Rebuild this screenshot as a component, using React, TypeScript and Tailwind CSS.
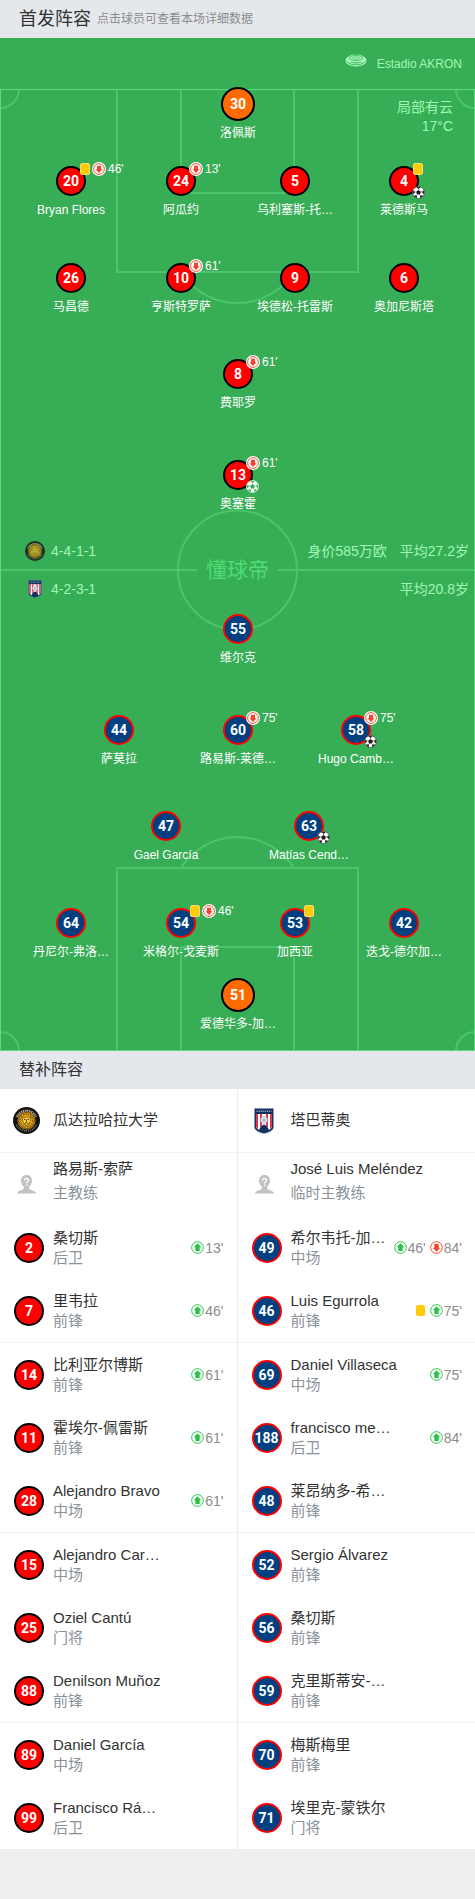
import { useState } from 'react'

type SubEvent = { kind: 'card' | 'in' | 'out'; minute?: string }

type Starter = {
  no: number
  name: string
  x: number
  y: number
  kit: Kit
  card?: boolean
  off?: string
  ball?: 'goal' | 'assist'
}

type Kit = 'home' | 'away' | 'keeper'

type Sub = { no: number; name: string; role: string; events?: SubEvent[] }

const PITCH_W = 475
const PITCH_H = 962

const kitStyles: Record<Kit, string> = {
  home: 'size-[30px] border-black bg-[#ff0000]',
  away: 'size-[30px] border-[#ff0000] bg-[#003f80]',
  keeper: 'size-[34px] border-black bg-[#ff6b00]',
}

// x / y are the centre of the shirt badge in pitch units
const starters: Starter[] = [
  { no: 30, name: '洛佩斯', x: 238, y: 15, kit: 'keeper' },
  { no: 20, name: 'Bryan Flores', x: 71, y: 92, kit: 'home', card: true, off: "46'" },
  { no: 24, name: '阿瓜约', x: 181, y: 92, kit: 'home', off: "13'" },
  { no: 5, name: '乌利塞斯-托…', x: 295, y: 92, kit: 'home' },
  { no: 4, name: '莱德斯马', x: 404, y: 92, kit: 'home', card: true, ball: 'goal' },
  { no: 26, name: '马昌德', x: 71, y: 189, kit: 'home' },
  { no: 10, name: '亨斯特罗萨', x: 181, y: 189, kit: 'home', off: "61'" },
  { no: 9, name: '埃德松-托雷斯', x: 295, y: 189, kit: 'home' },
  { no: 6, name: '奥加尼斯塔', x: 404, y: 189, kit: 'home' },
  { no: 8, name: '费耶罗', x: 238, y: 285, kit: 'home', off: "61'" },
  { no: 13, name: '奥塞霍', x: 238, y: 386, kit: 'home', off: "61'", ball: 'assist' },
  { no: 55, name: '维尔克', x: 238, y: 540, kit: 'away' },
  { no: 44, name: '萨莫拉', x: 119, y: 641, kit: 'away' },
  { no: 60, name: '路易斯-莱德…', x: 238, y: 641, kit: 'away', off: "75'" },
  { no: 58, name: 'Hugo Camb…', x: 356, y: 641, kit: 'away', off: "75'", ball: 'goal' },
  { no: 47, name: 'Gael García', x: 166, y: 737, kit: 'away' },
  { no: 63, name: 'Matías Cend…', x: 309, y: 737, kit: 'away', ball: 'goal' },
  { no: 64, name: '丹尼尔-弗洛…', x: 71, y: 834, kit: 'away' },
  { no: 54, name: '米格尔-戈麦斯', x: 181, y: 834, kit: 'away', card: true, off: "46'" },
  { no: 53, name: '加西亚', x: 295, y: 834, kit: 'away', card: true },
  { no: 42, name: '迭戈-德尔加…', x: 404, y: 834, kit: 'away' },
  { no: 51, name: '爱德华多-加…', x: 238, y: 906, kit: 'keeper' },
]

const homeSubs: Sub[] = [
  { no: 2, name: '桑切斯', role: '后卫', events: [{ kind: 'in', minute: "13'" }] },
  { no: 7, name: '里韦拉', role: '前锋', events: [{ kind: 'in', minute: "46'" }] },
  { no: 14, name: '比利亚尔博斯', role: '前锋', events: [{ kind: 'in', minute: "61'" }] },
  { no: 11, name: '霍埃尔-佩雷斯', role: '前锋', events: [{ kind: 'in', minute: "61'" }] },
  { no: 28, name: 'Alejandro Bravo', role: '中场', events: [{ kind: 'in', minute: "61'" }] },
  { no: 15, name: 'Alejandro Car…', role: '中场' },
  { no: 25, name: 'Oziel Cantú', role: '门将' },
  { no: 88, name: 'Denilson Muñoz', role: '前锋' },
  { no: 89, name: 'Daniel García', role: '中场' },
  { no: 99, name: 'Francisco Rá…', role: '后卫' },
]

const awaySubs: Sub[] = [
  { no: 49, name: '希尔韦托-加…', role: '中场', events: [{ kind: 'in', minute: "46'" }, { kind: 'out', minute: "84'" }] },
  { no: 46, name: 'Luis Egurrola', role: '前锋', events: [{ kind: 'card' }, { kind: 'in', minute: "75'" }] },
  { no: 69, name: 'Daniel Villaseca', role: '中场', events: [{ kind: 'in', minute: "75'" }] },
  { no: 188, name: 'francisco me…', role: '后卫', events: [{ kind: 'in', minute: "84'" }] },
  { no: 48, name: '莱昂纳多-希…', role: '前锋' },
  { no: 52, name: 'Sergio Álvarez', role: '前锋' },
  { no: 56, name: '桑切斯', role: '前锋' },
  { no: 59, name: '克里斯蒂安-…', role: '前锋' },
  { no: 70, name: '梅斯梅里', role: '前锋' },
  { no: 71, name: '埃里克-蒙铁尔', role: '门将' },
]

function SubArrow({ kind, disc }: { kind: 'in' | 'out'; disc?: boolean }) {
  const color = kind === 'in' ? '#27c346' : '#f5432c'
  return (
    <svg viewBox={disc ? '0 0 28 28' : '2 2 24 24'} className={disc ? 'size-3.5' : 'size-[13px]'} aria-hidden="true">
      <circle cx="14" cy="14" r="14" fill="#fff" />
      <circle cx="14" cy="14" r="10.8" fill="none" stroke={color} strokeWidth="1.8" />
      <path
        d="M14 6 L21 13.5 H18 V20.5 H10 V13.5 H7 Z"
        fill={color}
        transform={kind === 'out' ? 'rotate(180 14 14)' : undefined}
      />
    </svg>
  )
}

function Ball({ kind }: { kind: 'goal' | 'assist' }) {
  const dark = kind === 'goal' ? '#1c1c1c' : '#37ae55'
  return (
    <svg viewBox="0 0 26 26" className="size-[13px]" aria-hidden="true">
      <circle cx="13" cy="13" r="12" fill="#fff" />
      <path d="M13 8.2 L17.8 11.7 L16 17.2 H10 L8.2 11.7 Z" fill={dark} />
      <path d="M9.4 2.4 H16.6 L13 5 Z M23.4 9.4 L23.6 15.8 L20.6 12.4 Z M2.6 9.4 L2.4 15.8 L5.4 12.4 Z M21.4 20 L17 23.4 L17.2 19.6 Z M4.6 20 L9 23.400 L8.8 19.6 Z" fill={dark} stroke={dark} strokeWidth="1.6" />
      <path d="M13 8.2 V4 M17.8 11.7 L21.5 11.5 M16 17.2 L18 20 M10 17.2 L8 20 M8.2 11.7 L4.5 11.5" stroke={dark} strokeWidth="0.8" />
      <circle cx="13" cy="13" r="12" fill="none" stroke={kind === 'goal' ? '#4a4a4a' : '#d9f5e0'} strokeWidth="1.4" />
    </svg>
  )
}

function LionCrest({ className }: { className: string }) {
  return (
    <svg viewBox="0 0 54 54" className={className} aria-hidden="true">
      <circle cx="27" cy="27" r="27" fill="#16130f" />
      <path d="M8 20 A20.500 20.500 0 0 1 46 20" fill="none" stroke="#b5b2a8" strokeWidth="4" strokeDasharray="2.600 1.600" />
      <path d="M7 35 A22 22 0 0 0 47 35" fill="none" stroke="#8c897f" strokeWidth="3" strokeDasharray="2 2" />
      <circle cx="27" cy="27" r="18" fill="#e0a21c" />
      <circle cx="27" cy="27" r="16" fill="none" stroke="#4f3206" strokeWidth="1.6" />
      <circle cx="27" cy="27" r="12.5" fill="none" stroke="#8a5a0a" strokeWidth="2.6" strokeDasharray="3 2" />
      <path d="M18 20 L23 22 L27 19 L31 22 L36 20 L34 29 L30 36 H24 L20 29 Z" fill="#f8d53c" stroke="#5b3a06" strokeWidth="1.2" />
      <path d="M22 25 H25 M29 25 H32 M27 25 V30 M23 33 Q27 30 31 33" stroke="#3b2604" strokeWidth="1.6" fill="none" />
    </svg>
  )
}

function StripedCrest({ className }: { className: string }) {
  return (
    <svg viewBox="0 0 40 52" className={className} aria-hidden="true">
      <path d="M1 1 H39 V39 Q38 47 20 51 Q2 47 1 39 Z" fill="#12315f" stroke="#8a9ab5" strokeWidth="1" />
      <path d="M4 12 H36 V38 Q34 42 30 44 L26 36 L20 33 L14 36 L10 44 Q6 42 4 38 Z" fill="#fff" />
      <path d="M4 12 H8 V42 L4 38 Z M12 12 H16 V34 L12 40 Z M24 12 H28 V40 L24 34 Z M32 12 H36 V38 L32 42 Z" fill="#d93a50" />
      <path d="M5 6.500 H35" stroke="#8fa2c0" strokeWidth="3" strokeDasharray="2.5 1.6" />
      <circle cx="20" cy="24" r="7" fill="#e3e8ee" stroke="#8794a8" strokeWidth="1" />
      <path d="M20 20.5 L23.5 23.5 L22 27.5 H18 L16.5 23.5 Z" fill="#aab4c2" />
    </svg>
  )
}

function StadiumIcon() {
  return (
    <svg viewBox="0 0 44 26" className="h-[13px] w-[22px]" fill="none" stroke="#a0f8b4" aria-hidden="true">
      <path d="M2 8 L13 1.5 H31 L42 8 V12 Q38 17 22 17 Q6 17 2 12 Z" fill="#a0f8b4" stroke="none" />
      <ellipse cx="22" cy="8" rx="13.5" ry="5.2" stroke="#37ae55" strokeWidth="1.4" />
      <ellipse cx="22" cy="8" rx="7" ry="2.2" stroke="#37ae55" strokeWidth="1.2" />
      <path d="M1 11 Q3 15 12 18.500 Q22 21.500 32 18.500 Q41 15 43 11" strokeWidth="2.4" />
      <path d="M1.500 15 Q4 19.500 13 22.500 Q22 25.500 31 22.500 Q40 19.500 42.500 15" strokeWidth="2.6" />
    </svg>
  )
}

function CoachIcon() {
  return (
    <svg viewBox="0 0 38 38" className="size-[19px]" aria-hidden="true">
      <path
        d="M19 0 C26.5 0 30 5 30 11 C30 17 27.5 21 24 24 C24 28 26 29.5 31 31 C35 32.5 38 34 38 37 H0 C0 34 3 32.5 7 31 C12 29.5 14 28 14 24 C10.5 21 8 17 8 11 C8 5 11.5 0 19 0 Z"
        fill="#c2c2c2"
      />
      <path d="M15 11 Q15 7 19 7 Q23 7 23 11 Q23 13 19.5 15 V17 M19.5 19 V22" fill="none" stroke="#fff" strokeWidth="2.6" />
    </svg>
  )
}

function PitchLines() {
  return (
    <svg viewBox={`0 0 ${PITCH_W} ${PITCH_H}`} className="absolute inset-0 h-full w-full" fill="none" aria-hidden="true">
      <g stroke="#4cc46b" strokeWidth="2">
        <path d="M117 0 V183 H358 V0 M181 0 V104 H294 V0" />
        <path d="M181 183 A67 67 0 0 0 294 183" />
        <path d="M117 962 V779 H358 V962 M181 962 V858 H294 V962" />
        <path d="M181 779 A67 67 0 0 1 294 779" />
        <path d="M0 481 H197 M278 481 H475" />
        <circle cx="237.5" cy="481" r="59.5" />
        <path d="M19 0 A19 19 0 0 1 0 19 M456 0 A19 19 0 0 0 475 19 M19 962 A19 19 0 0 0 0 943 M456 962 A19 19 0 0 1 475 943" />
      </g>
      <rect x="0.5" y="0.5" width="474" height="961" stroke="#5fd980" />
    </svg>
  )
}

function StarterPin({ player, active, onSelect }: { player: Starter; active: boolean; onSelect: () => void }) {
  return (
    <div
      className="absolute"
      style={{ left: `${(player.x / PITCH_W) * 100}%`, top: `${(player.y / PITCH_H) * 100}%` }}
    >
      <button
        type="button"
        onClick={onSelect}
        aria-pressed={active}
        className="relative flex h-[34px] w-[34px] -translate-x-1/2 -translate-y-1/2 cursor-pointer items-center justify-center"
      >
        <span className={`flex items-center justify-center rounded-full border-2 font-[Roboto] text-sm font-bold text-white ${kitStyles[player.kit]}`}>
          {player.no}
        </span>
        <span className="absolute top-9 left-1/2 -translate-x-1/2 text-xs leading-5 whitespace-nowrap text-white">
          {player.name}
        </span>
        {(player.card || player.off) && (
          <span className="absolute -top-[3px] left-[25px] flex h-4 items-center gap-0.5 text-xs text-white">
            {player.card && <i className="ml-px h-3 w-2.5 rounded-xs border border-[#f5dc7c] bg-[#ffcb05]" />}
            {player.off && (
              <>
                <SubArrow kind="out" disc />
                <span className="leading-3.5">{player.off}</span>
              </>
            )}
          </span>
        )}
        {player.ball && (
          <span className="absolute top-[22px] left-[25px]">
            <Ball kind={player.ball} />
          </span>
        )}
      </button>
    </div>
  )
}

function SubRow({ sub, kit }: { sub: Sub; kit: Kit }) {
  return (
    <div className="flex h-[63px] items-center pr-[13px] pl-3.5">
      <span className={`flex shrink-0 items-center justify-center rounded-full border-2 font-[Roboto] text-sm font-bold text-white ${kitStyles[kit]}`}>
        {sub.no}
      </span>
      <div className="ml-[9px] min-w-0 flex-1 text-[15px] leading-5 whitespace-nowrap">
        <p className="text-[#333]">{sub.name}</p>
        <p className="text-[#8a9299]">{sub.role}</p>
      </div>
      <div className="flex items-center gap-1 text-sm text-[#8c8c8c]">
        {sub.events?.map((ev, i) =>
          ev.kind === 'card' ? (
            <i key={i} className="mr-px h-[11px] w-[9px] rounded-xs bg-[#ffcb05]" />
          ) : (
            <span key={i} className="flex items-center gap-px">
              <SubArrow kind={ev.kind} />
              {ev.minute}
            </span>
          )
        )}
      </div>
    </div>
  )
}

function Bench({ team, crest, coach, coachRole, subs, kit }: {
  team: string
  crest: React.ReactNode
  coach: string
  coachRole: string
  subs: Sub[]
  kit: Kit
}) {
  return (
    <div className="min-w-0 border-r border-[#ebebeb] last:border-r-0">
      <div className="flex h-16 items-center border-b border-[#f3f3f3] pl-[13px] text-[15px] text-[#333]">
        <span className="flex w-[27px] justify-center">{crest}</span>
        <h3 className="ml-[13px]">{team}</h3>
      </div>
      <div className="flex h-[63px] items-center pl-[13px] text-[15px]">
        <span className="flex w-[27px] justify-center">
          <CoachIcon />
        </span>
        <div className="ml-[13px] pb-2 leading-6">
          <p className="text-[#333]">{coach}</p>
          <p className="text-[#8a9299]">{coachRole}</p>
        </div>
      </div>
      <ul>
        {subs.map((sub, i) => (
          <li key={sub.no} className={i % 3 === 1 ? 'border-b border-[#f3f3f3]' : ''}>
            <SubRow sub={sub} kit={kit} />
          </li>
        ))}
      </ul>
    </div>
  )
}

export default function App() {
  const [selected, setSelected] = useState<number | null>(null)

  return (
    <main className="min-h-screen bg-[#eeeff1] font-['Liberation_Sans','Noto_Sans_CJK_SC',sans-serif]" lang="zh-CN">
      <header className="flex h-[38px] items-center gap-1.5 bg-[#e4e7ec] px-[19px]">
        <h2 className="text-lg text-[#333]">首发阵容</h2>
        <p className="text-xs text-[#8c8c8c]">点击球员可查看本场详细数据</p>
      </header>

      <section className="bg-[#37ae55] text-[#a0f8b4]">
        <div className="flex h-[51px] items-center justify-end gap-2.5 pr-[13px] text-xs">
          <span className="pb-1.5">
            <StadiumIcon />
          </span>
          <span>Estadio AKRON</span>
        </div>
        <div className="relative aspect-[475/962]">
          <PitchLines />
          <p className="absolute top-[9px] right-[22px] text-right text-sm leading-[19px]">
            局部有云
            <br />
            17°C
          </p>

          <div className="absolute inset-x-0 top-1/2 flex -translate-y-1/2 flex-col pr-1.5 pl-[25px] text-sm leading-[38px]">
            <div className="flex h-[38px] items-center">
              <LionCrest className="size-5 opacity-80" />
              <span className="ml-1.5">4-4-1-1</span>
              <span className="ml-auto">身价585万欧</span>
              <span className="ml-[13px]">平均27.2岁</span>
            </div>
            <div className="flex h-[38px] items-center">
              <span className="flex w-5 justify-center">
                <StripedCrest className="h-[18px] w-3.5" />
              </span>
              <span className="ml-1.5">4-2-3-1</span>
              <span className="ml-auto">平均20.8岁</span>
            </div>
          </div>
          <span className="absolute top-1/2 left-1/2 -translate-x-1/2 -translate-y-1/2 text-[21px] whitespace-nowrap text-[#50dc76]">
            懂球帝
          </span>

          {starters.map((p) => (
            <StarterPin key={p.no} player={p} active={selected === p.no} onSelect={() => setSelected(p.no)} />
          ))}
        </div>
      </section>

      <header className="flex h-[38px] items-center bg-[#e4e7ec] px-[19px]">
        <h2 className="text-base text-[#333]">替补阵容</h2>
      </header>

      <section className="grid grid-cols-2 bg-white">
        <Bench
          team="瓜达拉哈拉大学"
          crest={<LionCrest className="size-[27px]" />}
          coach="路易斯-索萨"
          coachRole="主教练"
          subs={homeSubs}
          kit="home"
        />
        <Bench
          team="塔巴蒂奥"
          crest={<StripedCrest className="h-[26px] w-5" />}
          coach="José Luis Meléndez"
          coachRole="临时主教练"
          subs={awaySubs}
          kit="away"
        />
      </section>
    </main>
  )
}
